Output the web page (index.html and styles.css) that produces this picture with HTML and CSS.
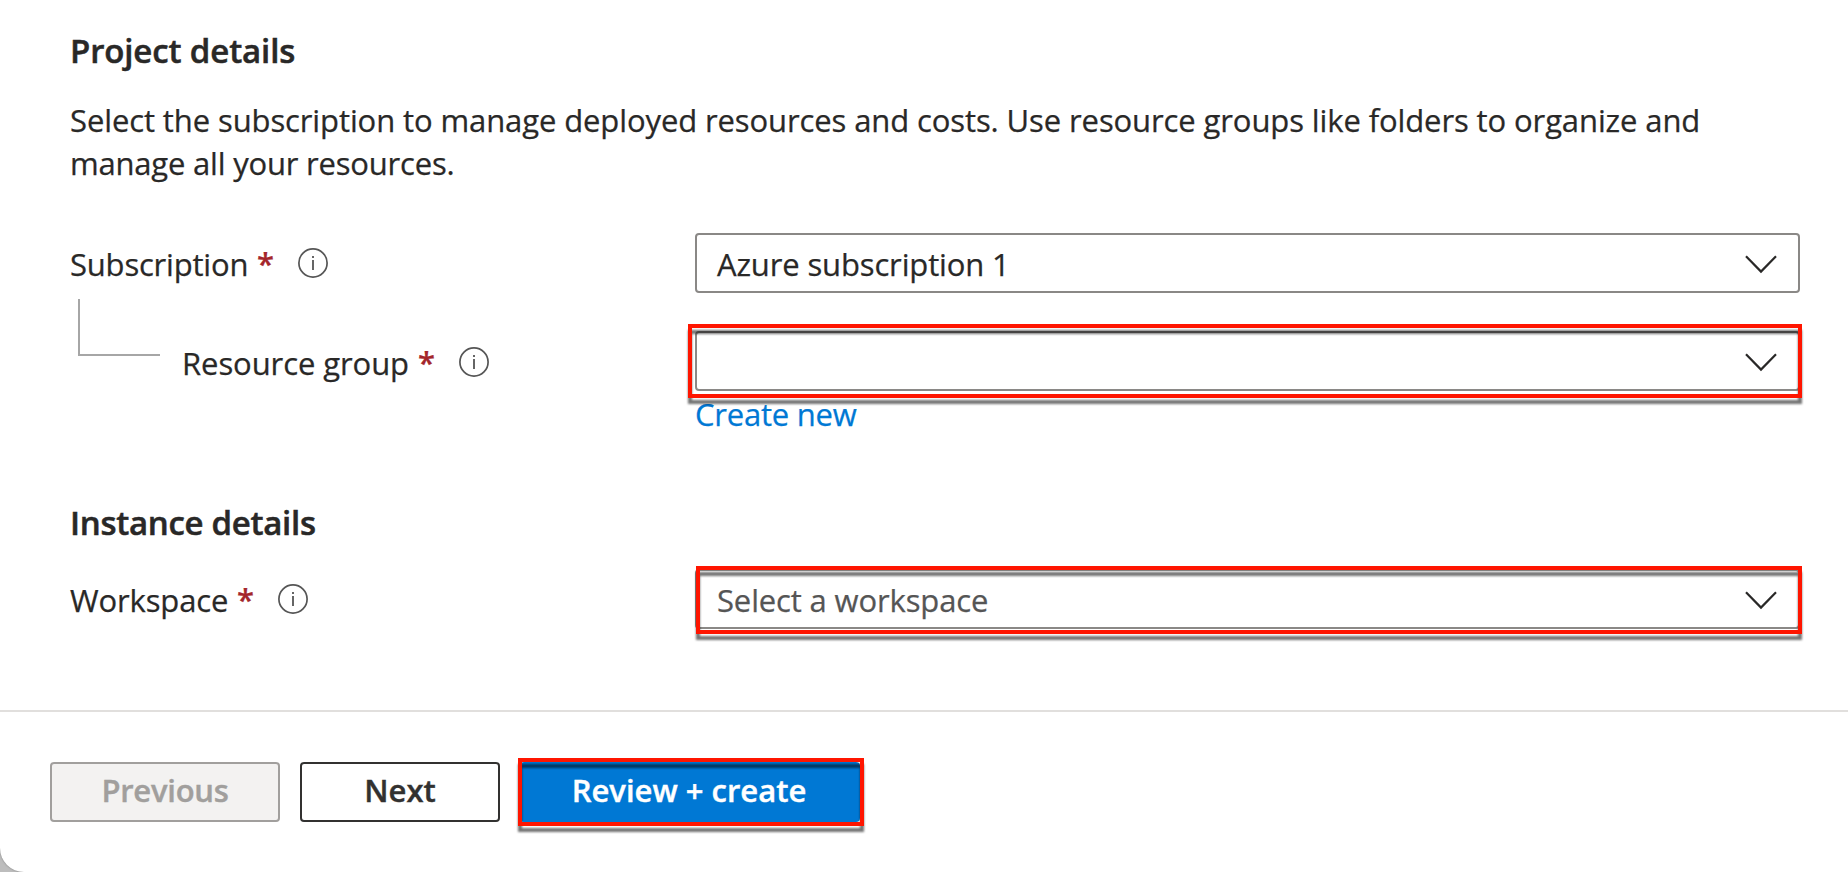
FILE: index.html
```html
<!DOCTYPE html>
<html lang="en">
<head>
<meta charset="utf-8">
<title>Create resource</title>
<link rel="stylesheet" href="styles.css">
</head>
<body>
<svg class="defs" aria-hidden="true">
  <symbol id="info" viewBox="0 0 30 30">
    <circle cx="15" cy="15" r="14.1" fill="none" stroke="#555" stroke-width="1.7"/>
    <rect x="14.1" y="8" width="1.8" height="2" fill="#555"/>
    <rect x="14.1" y="12" width="1.8" height="10" fill="#555"/>
  </symbol>
  <symbol id="chevron" viewBox="0 0 32 19">
    <path d="M1 1.2 16 16.6 31 1.2" fill="none" stroke="#292827" stroke-width="2.2"/>
  </symbol>
</svg>
<main class="panel">
  <section class="content">
    <h2 class="heading heading-project">Project details</h2>
    <p class="description"><span class="line-one">Select the subscription to manage deployed resources and costs. Use resource groups like folders to organize and</span><br><span class="line-two">manage all your resources.</span></p>

    <div class="row row-subscription">
      <div class="label">
        <span class="name name-subscription">Subscription</span><span class="required">*</span><svg class="info"><use href="#info"/></svg>
      </div>
      <div class="field"><div class="select"><span class="value value-subscription">Azure subscription 1</span><svg class="chevron"><use href="#chevron"/></svg></div></div>
    </div>

    <div class="row row-group">
      <div class="connector"></div>
      <div class="label label-nested">
        <span class="name name-group">Resource group</span><span class="required">*</span><svg class="info"><use href="#info"/></svg>
      </div>
      <div class="field"><div class="select"><span class="value"></span><svg class="chevron"><use href="#chevron"/></svg></div><div class="highlight highlight-group"></div></div>
    </div>
    <a class="create-link"><span>Create new</span></a>

    <h2 class="heading heading-instance">Instance details</h2>
    <div class="row row-workspace">
      <div class="label">
        <span class="name name-workspace">Workspace</span><span class="required">*</span><svg class="info"><use href="#info"/></svg>
      </div>
      <div class="field"><div class="select"><span class="value placeholder">Select a workspace</span><svg class="chevron"><use href="#chevron"/></svg></div><div class="highlight highlight-workspace"></div></div>
    </div>
  </section>

  <footer class="footer">
    <button class="button button-previous" disabled>Previous</button>
    <button class="button button-next">Next</button>
    <div class="primary"><button class="button button-create">Review + create</button><div class="highlight highlight-create"></div></div>
  </footer>
</main>
</body>
</html>
```
FILE: styles.css
```css
* { box-sizing: border-box; }
body {
  margin: 0;
  height: 872px;
  overflow: hidden;
  background: #bdbdbd;
  font-family: "Open Sans", "Noto Sans", sans-serif;
  font-size: 31px;
  line-height: 43px;
  color: #292827;
  -webkit-text-stroke: 0.25px currentColor;
}
.defs { display: none; }
.panel {
  height: 872px;
  background: #fff;
  border-bottom-left-radius: 24px;
  box-shadow: 0 0 2px #777;
}
.content { height: 710px; padding: 29px 48px 0 70px; }
.heading { margin: 0; font-size: 33px; line-height: 44px; font-weight: 600; white-space: nowrap; -webkit-text-stroke-width: 0.5px; }
.heading-project { letter-spacing: -0.13px; }
.description { margin: 26px 0 0; white-space: nowrap; }
.line-one { letter-spacing: -0.105px; }
.line-two { letter-spacing: -0.2px; }
.row { display: flex; align-items: center; height: 60px; }
.row-subscription { margin-top: 48px; }
.row-group { margin-top: 38px; position: relative; }
.row-workspace { margin-top: 24px; }
.label { display: flex; align-items: center; width: 625px; flex: none; padding-top: 2px; white-space: nowrap; }
.label-nested { padding-left: 112px; padding-top: 4px; }
.name-subscription { width: 187px; letter-spacing: -0.2px; }
.name-group { width: 236px; letter-spacing: -0.08px; }
.name-workspace { width: 167px; letter-spacing: -0.13px; }
.required { color: #a4262c; font-weight: 600; width: 41px; margin-top: -2px; }
.info { width: 30px; height: 30px; margin-top: -2px; }
.connector {
  position: absolute;
  left: 8px;
  top: -32px;
  width: 82px;
  height: 57px;
  border-left: 2px solid #a6a6a6;
  border-bottom: 2px solid #a6a6a6;
}
.field { position: relative; flex: 1; }
.select {
  display: flex;
  align-items: center;
  justify-content: space-between;
  height: 60px;
  border: 2px solid #8a8886;
  border-radius: 4px;
  padding: 2px 21px 0 20px;
  background: #fff;
  white-space: nowrap;
}
.value { letter-spacing: -0.14px; }
.placeholder { color: #555; }
.chevron { width: 32px; height: 19px; }
.highlight {
  position: absolute;
  border: 4px solid #ff1500;
  filter: drop-shadow(0 6px 1.3px rgba(0, 0, 0, .55));
}
.highlight-group { left: -7px; right: -2px; top: -7px; bottom: -7px; }
.highlight-workspace { left: 1px; right: -2px; top: -3px; bottom: -5px; }
.highlight-create { left: -2px; right: -4px; top: -4px; bottom: -4px; }
.create-link { display: block; margin: 2px 0 0 625px; color: #0078d4; letter-spacing: -0.22px; }
.heading-instance { margin-top: 65px; letter-spacing: -0.3px; }
.footer { display: flex; gap: 20px; border-top: 2px solid #e1dfdd; padding: 50px 0 0 50px; }
.button {
  height: 60px;
  border: 2px solid #323130;
  border-radius: 4px;
  background: #fff;
  padding: 0 0 4px;
  font: 600 31px/43px "Open Sans", "Noto Sans", sans-serif;
  color: #323130;
  white-space: nowrap;
  -webkit-text-stroke: 0.4px currentColor;
}
.button-previous { width: 230px; background: #f3f2f1; border-color: #a19f9d; color: #a19f9d; letter-spacing: -0.25px; }
.button-next { width: 200px; }
.primary { position: relative; width: 340px; height: 60px; }
.button-create { width: 340px; padding-right: 2px; background: #0078d4; border-color: #0078d4; color: #fff; }
```
